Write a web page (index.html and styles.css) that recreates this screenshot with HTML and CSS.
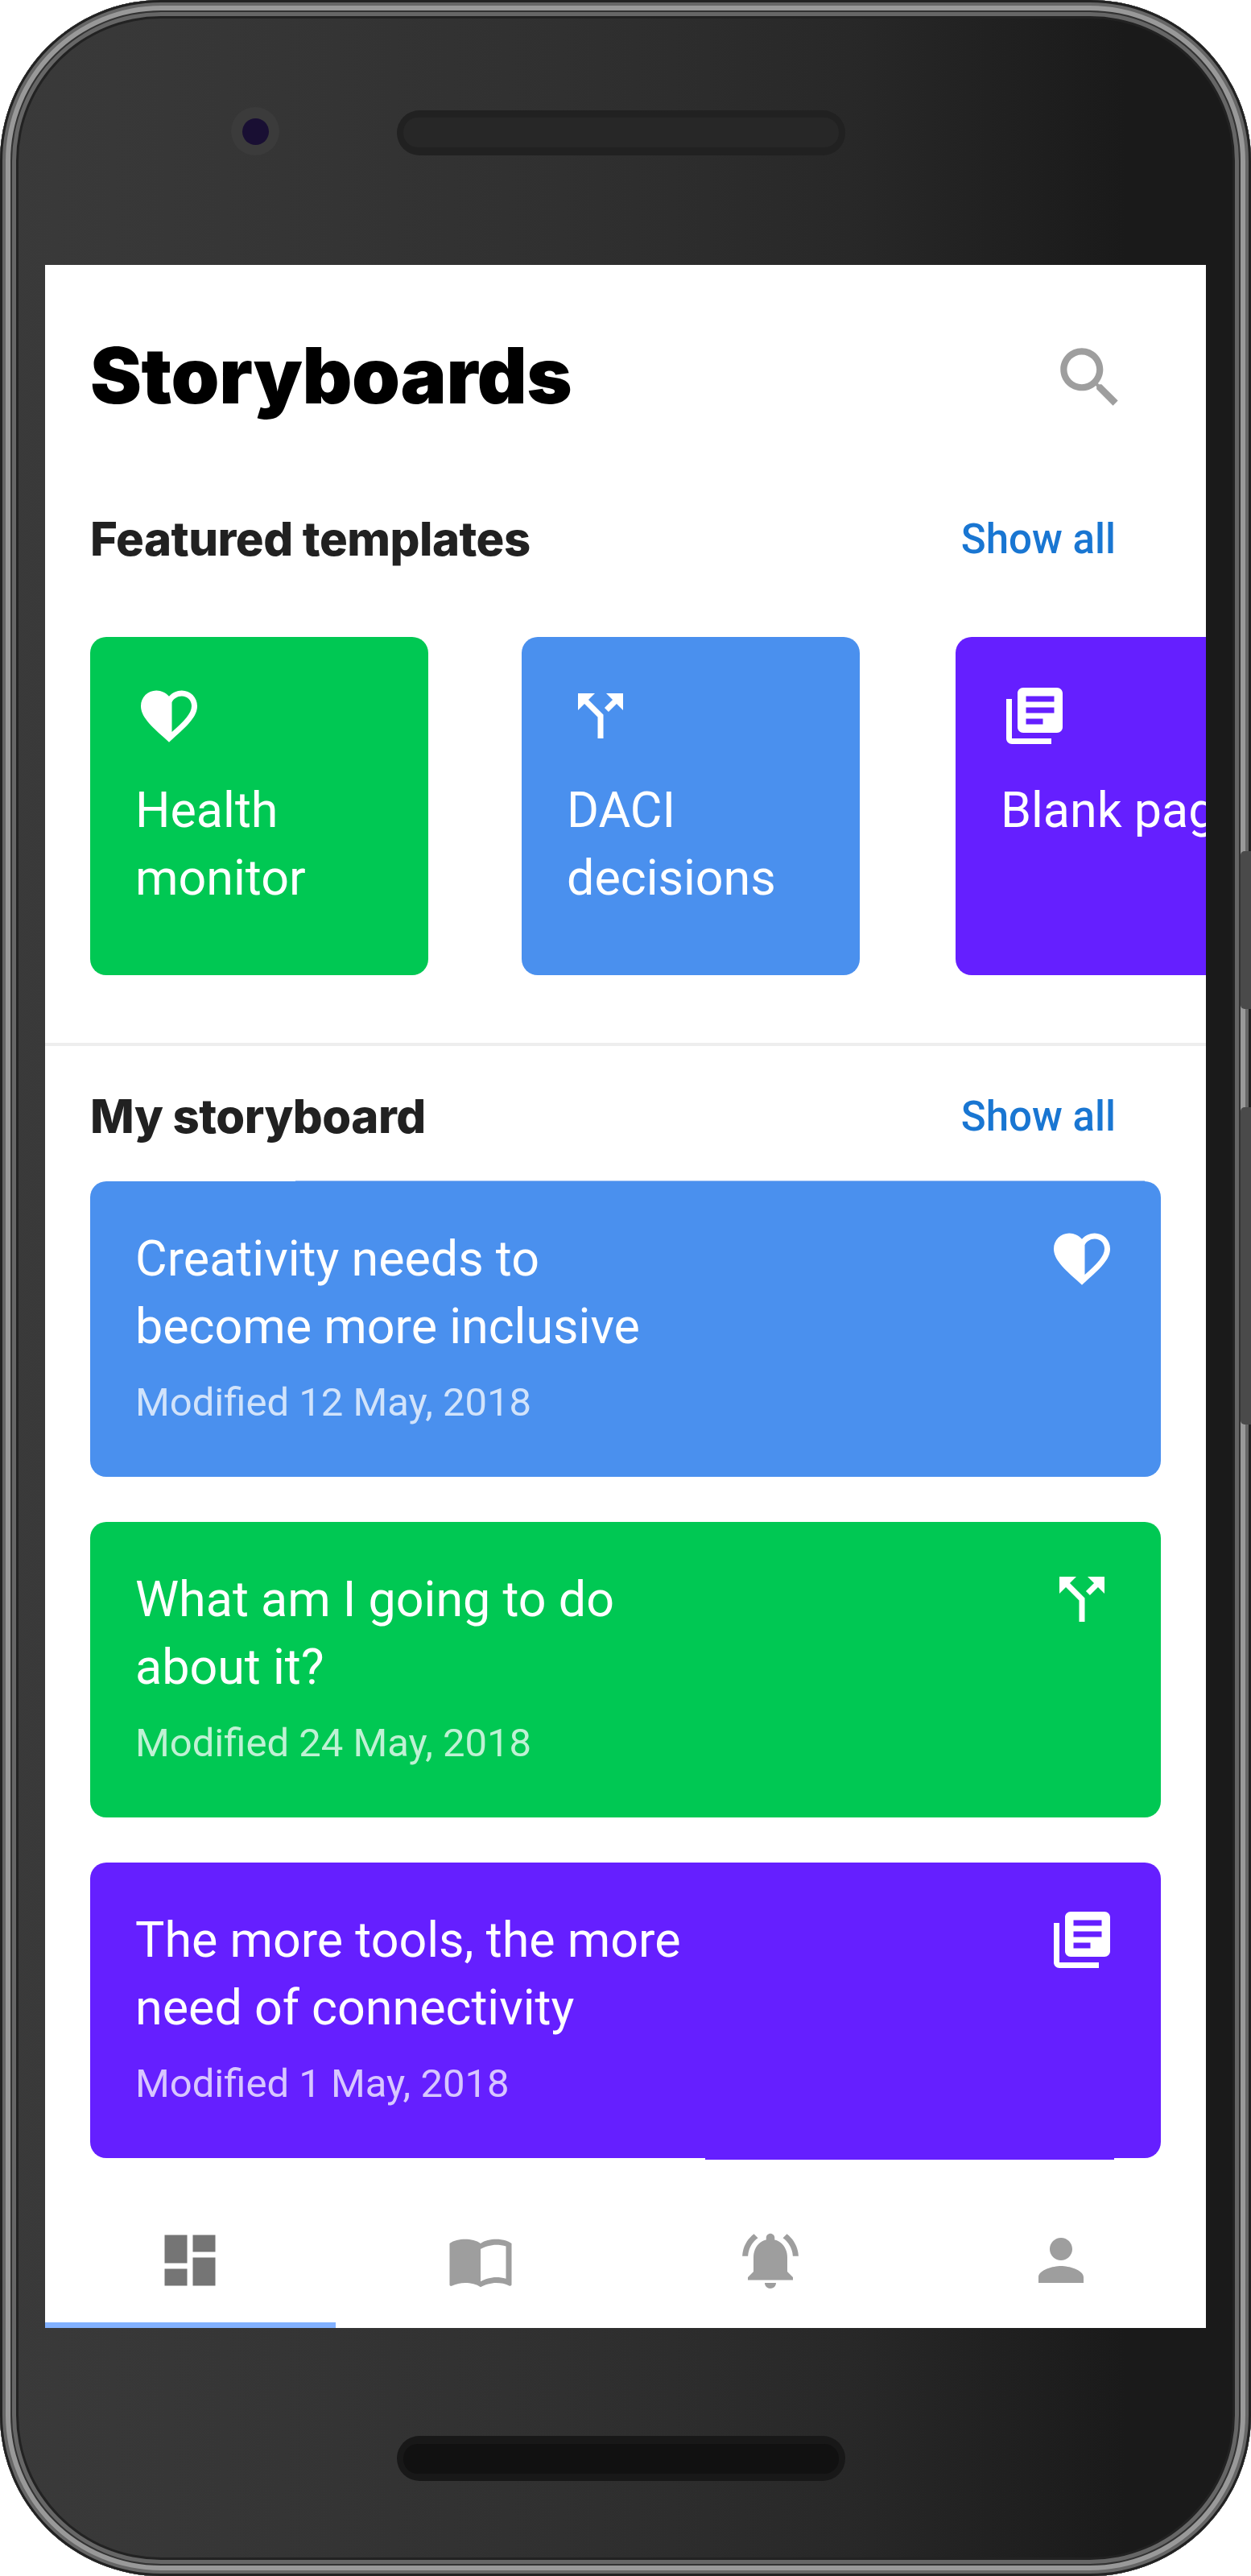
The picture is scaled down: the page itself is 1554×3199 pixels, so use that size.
FILE: index.html

```html
<!DOCTYPE html>
<html lang="en">
<head>
    <meta charset="UTF-8">
    <title>Storyboards</title>
    <link rel="stylesheet" href="styles.css">
</head>
<body>

<div class="phone">
    <div class="side-button side-button-top"></div>
    <div class="side-button side-button-bottom"></div>

    <div class="bezel-top">
        <div class="camera"><div class="lens"></div></div>
        <div class="speaker"><div class="speaker-inner"></div></div>
    </div>

    <div class="screen">
        <div class="header">
            <h1>Storyboards</h1>
            <svg class="icon icon-search" viewBox="0 0 24 24"><path d="M15.5 14h-.79l-.28-.27C15.41 12.59 16 11.11 16 9.5 16 5.91 13.09 3 9.5 3S3 5.91 3 9.5 5.91 16 9.5 16c1.61 0 3.09-.59 4.23-1.57l.27.28v.79l5 4.99L20.49 19l-4.99-5zm-6 0C7.01 14 5 11.99 5 9.5S7.01 5 9.5 5 14 7.01 14 9.5 11.99 14 9.5 14z"/></svg>
        </div>

        <div class="section-head section-head-featured">
            <h2>Featured templates</h2>
            <a class="show-all">Show all</a>
        </div>

        <div class="templates">
            <div class="template green">
                <svg class="icon" viewBox="0 0 24 24"><path d="M16.5 5C15 5 13.58 5.91 13 7.2v10.54C17.25 13.87 20 11.2 20 8.5 20 6.5 18.5 5 16.5 5m0-2C19.58 3 22 5.41 22 8.5c0 3.77-3.4 6.86-8.55 11.53L12 21.35l-1.45-1.32C5.4 15.36 2 12.27 2 8.5 2 5.41 4.42 3 7.5 3c1.74 0 3.41.81 4.5 2.08C13.09 3.81 14.76 3 16.5 3z"/></svg>
                <p>Health<br>monitor</p>
            </div>
            <div class="template blue">
                <svg class="icon" viewBox="0 0 24 24"><path d="M14 4l2.29 2.29-2.88 2.88 1.42 1.42 2.88-2.88L20 10V4zm-4 0H4v6l2.29-2.29 4.71 4.7V20h2v-8.41l-5.29-5.3z"/></svg>
                <p>DACI<br>decisions</p>
            </div>
            <div class="template purple">
                <svg class="icon" viewBox="0 0 24 24"><path d="M4 6H2v14c0 1.1.9 2 2 2h14v-2H4V6zm16-4H8c-1.1 0-2 .9-2 2v12c0 1.1.9 2 2 2h12c1.1 0 2-.9 2-2V4c0-1.1-.9-2-2-2zm-1 9H9V9h10v2zm-4 4H9v-2h6v2zm4-8H9V5h10v2z"/></svg>
                <p>Blank page</p>
            </div>
        </div>

        <div class="divider"></div>

        <div class="section-head section-head-mine">
            <h2>My storyboard</h2>
            <a class="show-all">Show all</a>
        </div>

        <div class="stories">
            <div class="story blue story-first">
                <div>
                    <p class="story-title">Creativity needs to<br>become more inclusive</p>
                    <p class="story-date">Modified 12 May, 2018</p>
                </div>
                <svg class="icon" viewBox="0 0 24 24"><path d="M16.5 5C15 5 13.58 5.91 13 7.2v10.54C17.25 13.87 20 11.2 20 8.5 20 6.5 18.5 5 16.5 5m0-2C19.58 3 22 5.41 22 8.5c0 3.77-3.4 6.86-8.55 11.53L12 21.35l-1.45-1.32C5.4 15.36 2 12.27 2 8.5 2 5.41 4.42 3 7.5 3c1.74 0 3.41.81 4.5 2.08C13.09 3.81 14.76 3 16.5 3z"/></svg>
            </div>
            <div class="story green">
                <div>
                    <p class="story-title">What am I going to do<br>about it?</p>
                    <p class="story-date">Modified 24 May, 2018</p>
                </div>
                <svg class="icon" viewBox="0 0 24 24"><path d="M14 4l2.29 2.29-2.88 2.88 1.42 1.42 2.88-2.88L20 10V4zm-4 0H4v6l2.29-2.29 4.71 4.7V20h2v-8.41l-5.29-5.3z"/></svg>
            </div>
            <div class="story purple story-last">
                <div>
                    <p class="story-title">The more tools, the more<br>need of connectivity</p>
                    <p class="story-date">Modified 1 May, 2018</p>
                </div>
                <svg class="icon" viewBox="0 0 24 24"><path d="M4 6H2v14c0 1.1.9 2 2 2h14v-2H4V6zm16-4H8c-1.1 0-2 .9-2 2v12c0 1.1.9 2 2 2h12c1.1 0 2-.9 2-2V4c0-1.1-.9-2-2-2zm-1 9H9V9h10v2zm-4 4H9v-2h6v2zm4-8H9V5h10v2z"/></svg>
            </div>
        </div>

        <div class="tabs">
            <div class="tab tab-active">
                <svg class="icon icon-dark" viewBox="0 0 24 24"><path d="M3 13h8V3H3v10zm0 8h8v-6H3v6zm10 0h8V11h-8v10zm0-18v6h8V3h-8z"/></svg>
            </div>
            <div class="tab">
                <svg class="icon icon-grey" viewBox="0 0 24 24"><path d="M21 5c-1.11-.35-2.33-.5-3.5-.5-1.95 0-4.05.4-5.5 1.5-1.45-1.1-3.55-1.5-5.5-1.5S2.45 4.9 1 6v14.65c0 .25.25.5.5.5.1 0 .15-.05.25-.05C3.1 20.45 5.05 20 6.5 20c1.95 0 4.05.4 5.5 1.5 1.35-.85 3.8-1.5 5.5-1.5 1.65 0 3.35.3 4.75 1.05.1.05.15.05.25.05.25 0 .5-.25.5-.5V6c-.6-.45-1.25-.75-2-1zm0 13.5c-1.1-.35-2.3-.5-3.5-.5-1.7 0-4.15.65-5.5 1.5V8c1.35-.85 3.8-1.5 5.5-1.5 1.2 0 2.4.15 3.5.5v11.5z"/></svg>
            </div>
            <div class="tab">
                <svg class="icon icon-grey" viewBox="0 0 24 24"><path d="M7.58 4.08L6.15 2.65C3.75 4.48 2.17 7.3 2.03 10.5h2c.15-2.65 1.51-4.97 3.55-6.42zm12.39 6.42h2c-.15-3.2-1.73-6.02-4.12-7.85l-1.42 1.43c2.02 1.45 3.39 3.77 3.54 6.42zM18 11c0-3.07-1.64-5.64-4.5-6.32V4c0-.83-.67-1.5-1.5-1.5s-1.5.67-1.5 1.5v.68C7.63 5.36 6 7.92 6 11v5l-2 2v1h16v-1l-2-2v-5zm-6 11c.14 0 .27-.01.4-.04.65-.14 1.18-.58 1.44-1.18.1-.24.15-.5.15-.78h-4c.01 1.1.9 2 2.01 2z"/></svg>
            </div>
            <div class="tab">
                <svg class="icon icon-grey" viewBox="0 0 24 24"><path d="M12 12c2.21 0 4-1.79 4-4s-1.79-4-4-4-4 1.79-4 4 1.79 4 4 4zm0 2c-2.67 0-8 1.34-8 4v2h16v-2c0-2.66-5.33-4-8-4z"/></svg>
            </div>
        </div>
    </div>

    <div class="bezel-bottom">
        <div class="speaker speaker-dark"><div class="speaker-inner"></div></div>
    </div>
</div>

</body>
</html>
```

FILE: styles.css

```css
* {
    box-sizing: border-box;
}
body {
    margin: 0;
    background-color: white;
    font-family: Roboto, Arial, sans-serif;
}
h1, h2, p {
    margin: 0;
}

/* phone body */
.phone {
    position: relative;
    width: 1554px;
    height: 3199px;
    padding: 0 56px;
    border-radius: 200px;
    background: linear-gradient(90deg, #3a3a3a 0%, #303030 45%, #282828 68%, #1a1a1a 90%);
    box-shadow:
        inset 0 0 0 3px #222,
        inset 0 0 0 7px #666,
        inset 0 0 0 13px #999,
        inset 0 0 0 15px #333,
        inset 0 0 0 20px #666,
        inset 0 0 0 23px #222;
}
.side-button {
    position: absolute;
    right: 0;
    width: 13px;
    background-color: #4a4a4a;
    border-radius: 5px 0 0 5px;
}
.side-button-top {
    top: 1057px;
    height: 196px;
}
.side-button-bottom {
    top: 1375px;
    height: 394px;
}
.bezel-top {
    display: flex;
    align-items: center;
    height: 329px;
    padding-left: 231px;
}
.bezel-bottom {
    display: flex;
    height: 308px;
    padding: 134px 0 0 437px;
}
.camera {
    display: flex;
    align-items: center;
    justify-content: center;
    width: 60px;
    height: 60px;
    margin-right: 146px;
    margin-bottom: 3px;
    border-radius: 50%;
    background-color: #3b3b3b;
}
.lens {
    width: 33px;
    height: 33px;
    border-radius: 50%;
    background-color: #190f33;
}
.speaker {
    display: flex;
    align-items: center;
    justify-content: center;
    width: 557px;
    height: 56px;
    border-radius: 28px;
    background-color: #212121;
}
.speaker-inner {
    width: 541px;
    height: 37px;
    border-radius: 18px;
    background-color: #272727;
}
.speaker-dark {
    background-color: #181818;
}
.speaker-dark .speaker-inner {
    background-color: #111;
}

/* app screen */
.screen {
    display: flex;
    flex-direction: column;
    width: 1442px;
    height: 2562px;
    overflow: hidden;
    background-color: white;
}
.header {
    display: flex;
    justify-content: space-between;
    align-items: flex-start;
    padding: 81px 95px 0 56px;
}
h1 {
    font-family: Inter, Arial, sans-serif;
    font-size: 96px;
    font-weight: 900;
    line-height: 112px;
    letter-spacing: -0.4px;
    color: black;
}
.icon {
    display: block;
    flex: none;
    width: 84px;
    height: 84px;
    fill: white;
}
.icon-search {
    width: 98px;
    height: 98px;
    margin-top: 10px;
    fill: #9e9e9e;
}
.icon-dark {
    fill: #757575;
}
.icon-grey {
    fill: #9e9e9e;
}
.section-head {
    display: flex;
    justify-content: space-between;
    align-items: center;
    padding: 0 112px 0 56px;
}
.section-head-featured {
    margin-top: 114px;
}
.section-head-mine {
    margin-top: 54px;
}
h2 {
    font-family: Inter, Arial, sans-serif;
    font-size: 58px;
    font-weight: 800;
    line-height: 66px;
    letter-spacing: -0.5px;
    color: #212121;
}
.show-all {
    padding-top: 2px;
    font-size: 51px;
    font-weight: 500;
    line-height: 64px;
    color: #1976d2;
}

/* featured templates */
.templates {
    display: flex;
    gap: 116px;
    padding-left: 56px;
    margin-top: 89px;
}
.template {
    flex: none;
    width: 420px;
    height: 420px;
    padding: 56px;
    border-radius: 20px;
    color: white;
}
.template.purple {
    margin-left: 3px;
}
.template p {
    margin-top: 33px;
    font-size: 61px;
    line-height: 84px;
    white-space: nowrap;
}
.green {
    background-color: #00c853;
}
.blue {
    background-color: #4a90ee;
}
.purple {
    background-color: #651fff;
}
.divider {
    height: 4px;
    margin-top: 84px;
    background-color: #eee;
}

/* my storyboard */
.stories {
    display: flex;
    flex-direction: column;
    gap: 56px;
    padding: 0 56px;
    margin-top: 48px;
}
.story {
    position: relative;
    display: flex;
    justify-content: space-between;
    height: 367px;
    padding: 54px 56px 0;
    border-radius: 20px;
    color: white;
}
.story-title {
    font-size: 61px;
    line-height: 84px;
}
.story-date {
    margin-top: 20px;
    font-size: 49px;
    line-height: 66px;
    color: rgba(255, 255, 255, 0.75);
}
.story-first::before {
    content: "";
    position: absolute;
    top: -1px;
    left: 255px;
    right: 20px;
    height: 1px;
    background-color: #9cc0f5;
}
.story-last::after {
    content: "";
    position: absolute;
    bottom: -2px;
    left: 764px;
    right: 58px;
    height: 2px;
    background-color: #651fff;
}

/* bottom navigation */
.tabs {
    display: flex;
    margin-top: auto;
}
.tab {
    display: flex;
    justify-content: center;
    flex: 1;
    height: 126px;
}
.tab-active {
    border-bottom: 7px solid #82b1ff;
}
```
